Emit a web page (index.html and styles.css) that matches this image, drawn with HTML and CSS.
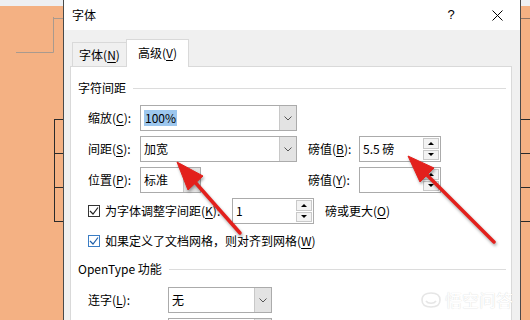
FILE: index.html
```html
<!DOCTYPE html>
<html lang="zh-CN">
<head>
    <meta charset="UTF-8">
    <title>字体</title>
    <link rel="stylesheet" href="styles.css">
</head>
<body>
    <div class="screen">
        <div class="side side-left">
            <svg width="63" height="320" viewBox="0 0 63 320">
                <rect x="0" y="0" width="63" height="6" fill="#eef0f3"/>
                <path d="M53.5 17 V52.5 M16 52.5 H53.5 M53.5 18.5 H63" stroke="#a99a8e" stroke-width="1" fill="none"/>
                <path d="M54.5 119 V222 M54 119.5 H63 M54 153.5 H63 M54 187.5 H63 M54 221.5 H63" stroke="#2b2b2b" stroke-width="1" fill="none"/>
            </svg>
        </div>

        <div class="dialog">
            <div class="titlebar">
                <span class="title">字体</span>
                <span class="caption-btn">?</span>
                <span class="caption-btn">
                    <svg width="11" height="11" viewBox="0 0 11 11"><path d="M0.5 0.5 L10.5 10.5 M10.5 0.5 L0.5 10.5" stroke="#000" stroke-width="1"/></svg>
                </span>
            </div>
            <div class="dialog-body">
                <div class="tabs">
                    <div class="tab">字体(<u>N</u>)</div>
                    <div class="tab active">高级(<u>V</u>)</div>
                </div>
                <div class="panel">
                    <div class="group-title"><span>字符间距</span><i></i></div>

                    <div class="row first">
                        <span class="label">缩放(<u>C</u>):</span>
                        <div class="combo wide">
                            <span class="val"><span class="selected">100%</span></span>
                            <span class="drop"><svg width="8" height="5" viewBox="0 0 8 5"><path d="M0.5 0.5 L4 4 L7.5 0.5" stroke="#555" fill="none"/></svg></span>
                        </div>
                    </div>

                    <div class="row">
                        <span class="label">间距(<u>S</u>):</span>
                        <div class="combo wide">
                            <span class="val">加宽</span>
                            <span class="drop"><svg width="8" height="5" viewBox="0 0 8 5"><path d="M0.5 0.5 L4 4 L7.5 0.5" stroke="#555" fill="none"/></svg></span>
                        </div>
                        <span class="label label2">磅值(<u>B</u>):</span>
                        <div class="spin">
                            <span class="val">5.5 磅</span>
                            <span class="spin-btns">
                                <span class="sb"><i class="up"></i></span>
                                <span class="sb"><i class="down"></i></span>
                            </span>
                        </div>
                    </div>

                    <div class="row">
                        <span class="label">位置(<u>P</u>):</span>
                        <div class="combo narrow">
                            <span class="val">标准</span>
                            <span class="drop"><svg width="8" height="5" viewBox="0 0 8 5"><path d="M0.5 0.5 L4 4 L7.5 0.5" stroke="#555" fill="none"/></svg></span>
                        </div>
                        <span class="label label2 far">磅值(<u>Y</u>):</span>
                        <div class="spin">
                            <span class="val"></span>
                            <span class="spin-btns">
                                <span class="sb"><i class="up"></i></span>
                                <span class="sb"><i class="down"></i></span>
                            </span>
                        </div>
                    </div>

                    <div class="row">
                        <span class="check"><svg width="10" height="10" viewBox="0 0 10 10"><path d="M1 5 L4 8 L9 1.5" stroke="#222" stroke-width="1.2" fill="none"/></svg></span>
                        <span class="check-label kern">为字体调整字间距(<u>K</u>):</span>
                        <div class="spin small">
                            <span class="val">1</span>
                            <span class="spin-btns">
                                <span class="sb"><i class="up"></i></span>
                                <span class="sb"><i class="down"></i></span>
                            </span>
                        </div>
                        <span class="after">磅或更大(<u>O</u>)</span>
                    </div>

                    <div class="row short">
                        <span class="check focus"><svg width="10" height="10" viewBox="0 0 10 10"><path d="M1 5 L4 8 L9 1.5" stroke="#1f5fa8" stroke-width="1.2" fill="none"/></svg></span>
                        <span class="check-label">如果定义了文档网格，则对齐到网格(<u>W</u>)</span>
                    </div>

                    <div class="group-title second"><span>OpenType 功能</span><i></i></div>

                    <div class="row lig">
                        <span class="label">连字(<u>L</u>):</span>
                        <div class="combo lig-box">
                            <span class="val">无</span>
                            <span class="drop"><svg width="8" height="5" viewBox="0 0 8 5"><path d="M0.5 0.5 L4 4 L7.5 0.5" stroke="#555" fill="none"/></svg></span>
                        </div>
                    </div>

                    <div class="row">
                        <span class="label"></span>
                        <div class="combo lig-box">
                            <span class="val"></span>
                            <span class="drop"></span>
                        </div>
                    </div>
                </div>
            </div>
        </div>

        <div class="side side-right">
            <svg width="9" height="320" viewBox="0 0 9 320">
                <rect x="0" y="0" width="9" height="6" fill="#eef0f3"/>
                <path d="M0 18.5 H9" stroke="#8c7363" stroke-width="1"/>
                <path d="M0 119.5 H9 M0 153.5 H9 M0 187.5 H9 M0 221.5 H9" stroke="#2b2b2b" stroke-width="1"/>
            </svg>
        </div>

        <svg class="arrows" width="530" height="320" viewBox="0 0 530 320">
            <g fill="#e3201c" stroke="#e3201c">
                <line x1="240" y1="233" x2="194" y2="181" stroke-width="3.5" stroke-linecap="round"/>
                <polygon points="177,162 203,176 188,190" stroke-width="1"/>
                <line x1="494" y1="242" x2="424" y2="172" stroke-width="3.5" stroke-linecap="round"/>
                <polygon points="408,156 434,168 420,182" stroke-width="1"/>
            </g>
        </svg>

        <div class="watermark">
            <svg width="22" height="18" viewBox="0 0 22 18">
                <path d="M2 9 C2 4 6 2 11 2 C16 2 20 4 20 9 C20 14 16 16 11 16 C6 16 2 14 2 9 Z M6 10 C8 13 14 13 16 10" fill="none" stroke="#e6e6e6" stroke-width="1.6"/>
            </svg>
            <span>悟空问答</span>
        </div>
    </div>
</body>
</html>
```

FILE: styles.css
```css
body {
    margin: 0;
    background-color: #f4b183;
    font-family: "Noto Sans CJK SC", sans-serif;
    font-size: 12px;
    color: #000;
    overflow: hidden;
}
u {
    text-underline-offset: 2px;
}
.screen {
    position: relative;
    display: flex;
    width: 530px;
    height: 320px;
    overflow: hidden;
}
.side svg {
    display: block;
}
.side-left {
    width: 63px;
    flex-shrink: 0;
}
.side-right {
    width: 9px;
    flex-shrink: 0;
}
.dialog {
    width: 456px;
    height: 320px;
    overflow: hidden;
    flex-shrink: 0;
    border-left: 1px solid #4a4a4a;
    border-right: 1px solid #4a4a4a;
    background-color: #f0f0f0;
    display: flex;
    flex-direction: column;
}
.titlebar {
    height: 30px;
    flex-shrink: 0;
    background-color: #fff;
    display: flex;
    align-items: center;
    padding-left: 8px;
    line-height: 16px;
}
.title {
    flex-grow: 1;
}
.caption-btn {
    width: 46px;
    height: 30px;
    display: flex;
    align-items: center;
    justify-content: center;
    font-family: "Liberation Sans", sans-serif;
    font-size: 13px;
}
.dialog-body {
    flex-grow: 1;
    min-height: 0;
    padding: 9px 8px 0 6px;
    display: flex;
    flex-direction: column;
}
.tabs {
    display: flex;
    align-items: flex-end;
    height: 27px;
    flex-shrink: 0;
    padding-left: 2px;
    line-height: 16px;
}
.tab {
    width: 55px;
    height: 24px;
    box-sizing: border-box;
    border: 1px solid #d9d9d9;
    border-bottom: none;
    display: flex;
    align-items: center;
    justify-content: center;
    background-color: #f0f0f0;
}
.tab.active {
    width: 63px;
    height: 28px;
    margin-bottom: -1px;
    margin-left: -1px;
    background-color: #fff;
    position: relative;
    z-index: 1;
    padding-bottom: 2px;
}
.panel {
    flex-grow: 1;
    min-height: 0;
    overflow: hidden;
    background-color: #fff;
    border: 1px solid #d9d9d9;
    border-bottom: none;
    padding: 13px 5px 0 7px;
    line-height: 16px;
}
.group-title {
    display: flex;
    align-items: center;
    height: 16px;
    gap: 7px;
}
.group-title i {
    flex-grow: 1;
    border-top: 1px solid #dcdcdc;
    margin-top: 1px;
}
.group-title.second {
    margin-top: 12px;
}
.row {
    display: flex;
    align-items: center;
    height: 26px;
    margin-left: 10px;
    margin-top: 5px;
}
.row.first {
    margin-top: 9px;
}
.row.short {
    height: 16px;
    margin-top: 9px;
}
.row.lig {
    margin-top: 10px;
}
.label {
    width: 52px;
    flex-shrink: 0;
}
.label2 {
    width: 51px;
    margin-left: 11px;
}
.label2.far {
    margin-left: 107px;
}
.row.lig .label,
.row .label:empty {
    width: 80px;
}
.combo,
.spin {
    display: flex;
    height: 26px;
    box-sizing: border-box;
    border: 1px solid #ababab;
    background-color: #fff;
}
.combo.wide {
    width: 157px;
}
.combo.narrow {
    width: 61px;
}
.combo.lig-box {
    width: 104px;
}
.val {
    flex-grow: 1;
    display: flex;
    align-items: center;
    padding-left: 3px;
    white-space: nowrap;
}
.selected {
    background-color: #9dc7ee;
    padding: 0 1px;
}
.drop {
    width: 16px;
    background-color: #e3e3e3;
    border-left: 1px solid #c8c8c8;
    display: flex;
    align-items: center;
    justify-content: center;
}
.spin {
    width: 82px;
}
.spin-btns {
    width: 16px;
    display: flex;
    flex-direction: column;
    padding: 1px 1px 1px 0;
    gap: 1px;
}
.sb {
    flex-grow: 1;
    border: 1px solid #c9c9c9;
    background-color: #f3f3f3;
    display: flex;
    align-items: center;
    justify-content: center;
}
.sb i {
    width: 0;
    height: 0;
    border-left: 3px solid transparent;
    border-right: 3px solid transparent;
}
.sb i.up {
    border-bottom: 3px solid #000;
}
.sb i.down {
    border-top: 3px solid #000;
}
.check {
    width: 12px;
    height: 12px;
    box-sizing: border-box;
    border: 1px solid #333;
    background-color: #fff;
    display: flex;
    align-items: center;
    justify-content: center;
    flex-shrink: 0;
}
.check.focus {
    border-color: #3b7dc4;
}
.check-label {
    margin-left: 5px;
    white-space: nowrap;
}
.check-label.kern {
    width: 127px;
}
.after {
    margin-left: 11px;
}
.arrows {
    position: absolute;
    left: 0;
    top: 0;
    pointer-events: none;
    filter: drop-shadow(1px 2px 1.5px rgba(0, 0, 0, 0.35));
}
.watermark {
    position: absolute;
    left: 420px;
    top: 290px;
    display: flex;
    align-items: center;
    gap: 3px;
    font-size: 17px;
    line-height: 20px;
    color: #fff;
    text-shadow: 0 0 1px rgba(0, 0, 0, 0.2);
}
```
